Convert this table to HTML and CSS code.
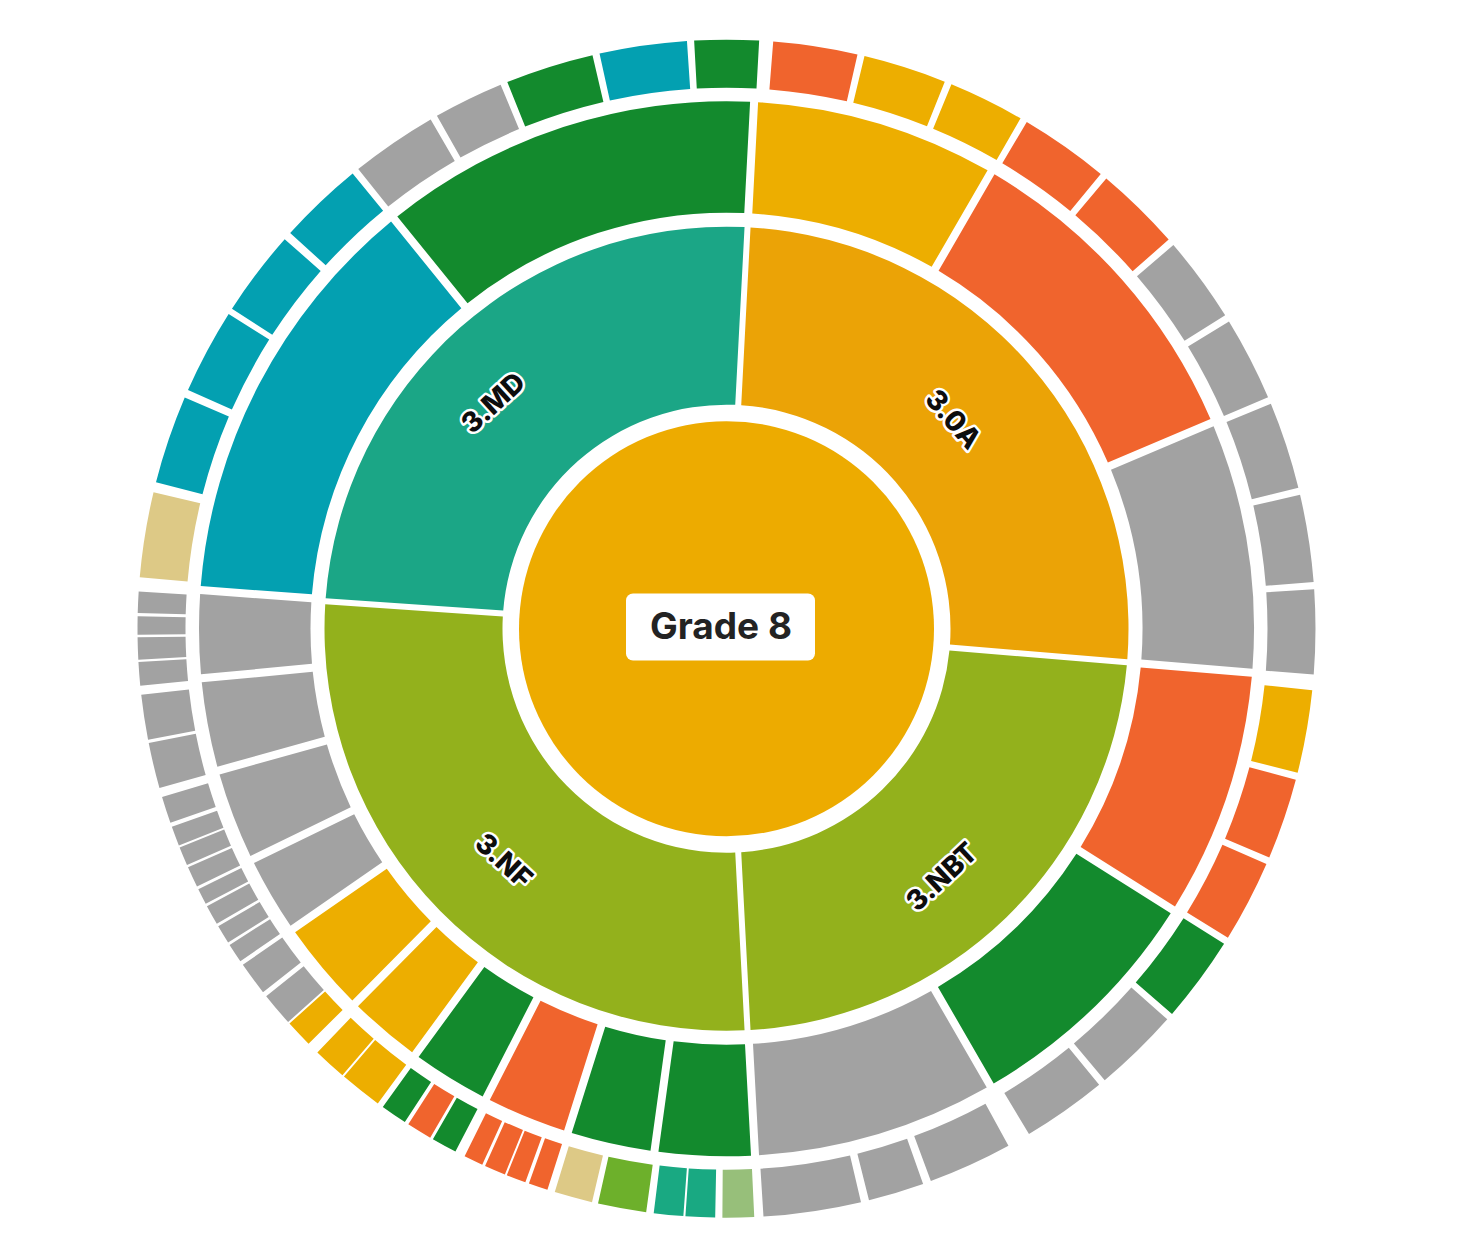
FILE: index.html
```html
<!DOCTYPE html>
<html lang="en">
<head>
<meta charset="utf-8">
<title>Grade 8 sunburst</title>
<link rel="stylesheet" href="styles.css">
</head>
<body>
<main class="page">
  <svg class="sunburst" id="sunburst" width="1459" height="1250" viewBox="0 0 1459 1250" xmlns="http://www.w3.org/2000/svg">
    <circle class="core" cx="726.5" cy="628.7" r="207.5"></circle>
    <g id="ring1"></g>
    <g id="ring2"></g>
    <g id="ring3"></g>
    <g class="labels">
      <text class="cat" transform="translate(493,402.5) rotate(-42.5)">3.MD</text>
      <text class="cat" transform="translate(953.5,419) rotate(49)">3.0A</text>
      <text class="cat" transform="translate(941.5,876.5) rotate(-43)">3.NBT</text>
      <text class="cat" transform="translate(504,860.5) rotate(43)">3.NF</text>
    </g>
    <g class="root-label">
      <rect class="root-box" x="626" y="593.5" width="189" height="67" rx="7" ry="7"></rect>
      <text class="root-text" x="721" y="639">Grade 8</text>
    </g>
  </svg>
</main>
<script src="script.js"></script>
</body>
</html>
```
FILE: styles.css
```css
html, body {
  margin: 0;
  padding: 0;
  background: #ffffff;
}
.page {
  width: 1459px;
  height: 1250px;
  display: flex;
}
.sunburst {
  display: block;
}
.core { fill: #EDAB00; }
.seg-oa { fill: #EBA306; }
.seg-olive { fill: #93B11C; }
.seg-teal { fill: #1BA686; }
.seg-green { fill: #138A2D; }
.seg-yellow { fill: #EDAE00; }
.seg-orange { fill: #F0642D; }
.seg-grey { fill: #A2A2A2; }
.seg-blue { fill: #03A0B1; }
.seg-tan { fill: #DDC986; }
.seg-sage { fill: #97BF7A; }
.seg-lime { fill: #6DB02B; }
.seg-teal3 { fill: #19A982; }

.cat {
  font-family: Inter, "Liberation Sans", sans-serif;
  font-weight: 800;
  font-size: 28px;
  fill: #0d0d0d;
  stroke: #ffffff;
  stroke-width: 5px;
  stroke-linejoin: round;
  paint-order: stroke;
  text-anchor: middle;
  dominant-baseline: central;
}
.root-box { fill: #ffffff; }
.root-text {
  font-family: Inter, "Liberation Sans", sans-serif;
  font-weight: 700;
  font-size: 37px;
  fill: #232323;
  text-anchor: middle;
}
```
FILE: script.js
```javascript
(function () {
  var CX = 726.5, CY = 628.7;
  var NS = 'http://www.w3.org/2000/svg';

  function pt(r, a) {
    var t = a * Math.PI / 180;
    return (CX + r * Math.sin(t)).toFixed(2) + ' ' + (CY - r * Math.cos(t)).toFixed(2);
  }

  function sector(r0, r1, a0, a1, pad) {
    var d1 = Math.asin(pad / r1) * 180 / Math.PI;
    var d0 = Math.asin(pad / r0) * 180 / Math.PI;
    var o0 = a0 + d1, o1 = a1 - d1, i0 = a0 + d0, i1 = a1 - d0;
    var lo = (o1 - o0) > 180 ? 1 : 0;
    var li = (i1 - i0) > 180 ? 1 : 0;
    return 'M' + pt(r1, o0) +
      ' A' + r1 + ' ' + r1 + ' 0 ' + lo + ' 1 ' + pt(r1, o1) +
      ' L' + pt(r0, i1) +
      ' A' + r0 + ' ' + r0 + ' 0 ' + li + ' 0 ' + pt(r0, i0) + ' Z';
  }

  var ring1 = [
    [3.0, 94.8, 'oa'], [94.8, 177.0, 'olive'], [177.0, 273.9, 'olive'], [273.9, 363.0, 'teal']
  ];

  var ring2 = [
    [3.0, 30.1, 'yellow'], [30.1, 67.0, 'orange'], [67.0, 94.8, 'grey'],
    [94.8, 122.2, 'orange'], [122.2, 150.0, 'green'], [150.0, 176.9, 'grey'],
    [176.9, 187.85, 'green'], [187.85, 197.5, 'green'], [197.5, 207.1, 'orange'],
    [207.1, 216.15, 'green'], [216.15, 224.75, 'yellow'], [224.75, 235.3, 'yellow'],
    [235.3, 244.05, 'grey'], [244.05, 254.4, 'grey'], [254.4, 264.6, 'grey'], [264.6, 274.2, 'grey'],
    [274.2, 320.95, 'blue'], [320.95, 363.0, 'green']
  ];

  var ring3 = [
    [4.55, 12.85, 'orange'], [13.55, 21.75, 'yellow'], [22.45, 29.95, 'yellow'],
    [30.65, 39.45, 'orange'], [40.15, 48.65, 'orange'], [49.35, 57.85, 'grey'], [58.55, 66.85, 'grey'],
    [67.55, 76.15, 'grey'], [76.85, 85.45, 'grey'], [86.15, 94.45, 'grey'],
    [96.0, 104.15, 'yellow'], [104.85, 112.85, 'orange'], [113.55, 121.65, 'orange'],
    [122.35, 130.85, 'green'], [131.55, 140.05, 'grey'], [140.75, 149.1, 'grey'],
    [151.4, 159.7, 'grey'], [160.5, 166.0, 'grey'], [166.8, 176.4, 'grey'],
    [177.3, 180.4, 'sage'], [181.1, 184.0, 'teal3'], [184.2, 187.1, 'teal3'],
    [187.84, 192.6, 'lime'], [193.2, 196.95, 'tan'],
    [197.7, 199.6, 'orange'], [199.97, 201.9, 'orange'], [202.1, 204.2, 'orange'], [204.5, 206.4, 'orange'],
    [207.4, 209.9, 'green'], [210.2, 212.7, 'orange'], [213.1, 215.7, 'green'],
    [216.3, 220.5, 'yellow'], [220.7, 224.0, 'yellow'], [225.2, 227.9, 'yellow'],
    [228.1, 231.4, 'grey'], [231.9, 235.2, 'grey'],
    [235.63, 237.53, 'grey'], [237.8, 239.65, 'grey'], [239.93, 241.9, 'grey'], [242.15, 243.74, 'grey'],
    [244.03, 246.1, 'grey'], [246.35, 248.2, 'grey'], [248.4, 250.34, 'grey'], [250.76, 253.4, 'grey'],
    [254.3, 258.8, 'grey'], [259.13, 263.56, 'grey'],
    [264.45, 266.76, 'grey'], [266.99, 269.16, 'grey'], [269.42, 271.2, 'grey'], [271.52, 273.63, 'grey'],
    [275.0, 283.4, 'tan'], [284.4, 293.1, 'blue'], [293.9, 302.3, 'blue'], [302.9, 311.4, 'blue'],
    [312.2, 320.6, 'blue'], [321.3, 329.85, 'grey'], [330.55, 337.45, 'grey'],
    [338.15, 346.85, 'green'], [347.55, 356.15, 'blue'], [356.85, 363.18, 'green']
  ];

  function draw(id, data, r0, r1, pad) {
    var g = document.getElementById(id);
    data.forEach(function (s) {
      var p = document.createElementNS(NS, 'path');
      p.setAttribute('d', sector(r0, r1, s[0], s[1], pad));
      p.setAttribute('class', 'seg-' + s[2]);
      g.appendChild(p);
    });
  }

  draw('ring1', ring1, 224, 402, 3);
  draw('ring2', ring2, 416, 527.5, 4);
  draw('ring3', ring3, 541, 589, 0);
})();
```
